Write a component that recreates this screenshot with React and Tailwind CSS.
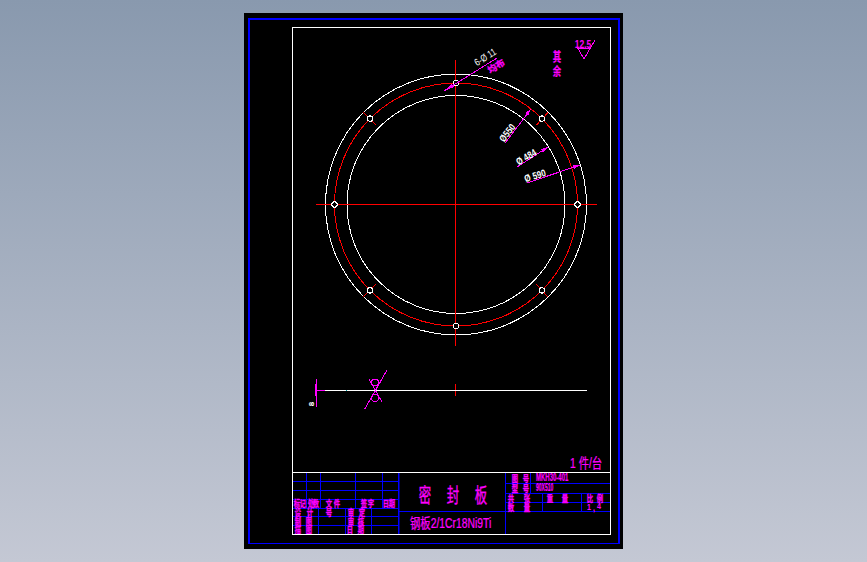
const MAGENTA = '#ff00ff';
const BLUE = '#0000ff';
const RED = '#ff0000';
const CJK = '"Liberation Sans", "Noto Sans CJK SC", sans-serif';

// blue grid of the title block: [x1, y1, x2, y2]
const gridLines = [
  [293, 481.5, 398, 481.5], [293, 490.5, 398, 490.5], [293, 499.5, 398, 499.5],
  [293, 516.5, 398, 516.5], [293, 525.5, 398, 525.5],
  [306.5, 472, 306.5, 508], [320.5, 472, 320.5, 508], [355.5, 472, 355.5, 508], [382.5, 472, 382.5, 508],
  [318.5, 508, 318.5, 534], [345.5, 508, 345.5, 534], [371.5, 508, 371.5, 534],
  [398, 511.5, 505, 511.5],
  [505, 483.5, 610, 483.5], [505, 493.5, 610, 493.5], [505, 511.5, 610, 511.5],
  [530.5, 472, 530.5, 493], [542.5, 493, 542.5, 511], [581.5, 493, 581.5, 511],
];

// small labels of the title block: [text, centre x, baseline y]
const labels = [
  ['标', 297, 507], ['记', 303, 507], ['处', 311, 507], ['数', 316, 507],
  ['文', 329, 507], ['件', 337, 507], ['签', 364, 507], ['字', 371, 507], ['日', 386, 507], ['期', 392, 507],
  ['设', 298, 515.5], ['计', 310, 515.5], ['号', 329, 515.5], ['审', 351, 515.5], ['定', 362, 515.5],
  ['制', 298, 524.5], ['图', 309, 524.5], ['审', 351, 524.5], ['核', 361, 524.5],
  ['描', 298, 533], ['图', 309, 533], ['日', 350, 533], ['期', 361, 533],
  ['图', 515, 481.5], ['号', 526, 481.5], ['型', 515, 491.5], ['号', 526, 491.5],
  ['共', 511, 501.5], ['张', 527, 501.5], ['重', 550, 501.5], ['量', 565, 501.5], ['比', 590, 501.5], ['例', 600, 501.5],
  ['数', 511, 510.5], ['量', 527, 510.5],
];

const holeAngles = [0, 45, 90, 135, 180, 225, 270, 315];

function Txt({ x, y, size, sx = 1, rotate = 0, fill = MAGENTA, anchor = 'middle', bold = false, heavy = 0, children }) {
  return (
    <text
      transform={`translate(${x} ${y}) rotate(${rotate}) scale(${sx} 1)`}
      fontSize={size}
      fill={fill}
      stroke={heavy ? fill : 'none'}
      strokeWidth={heavy}
      textAnchor={anchor}
      fontWeight={bold ? 700 : 400}
      fontFamily={CJK}
    >
      {children}
    </text>
  );
}

function Plate() {
  const cx = 456;
  const cy = 204.5;
  return (
    <g shapeRendering="crispEdges" fill="none">
      <circle cx={cx} cy={cy} r={130.5} stroke="#fff" />
      <circle cx={cx} cy={cy} r={109} stroke="#fff" />
      <circle cx={cx} cy={cy} r={121.5} stroke={RED} />
      <line x1={316} y1={204.5} x2={597} y2={204.5} stroke={RED} />
      <line x1={455.5} y1={60} x2={455.5} y2={346} stroke={RED} />
      <line x1={455.5} y1={384} x2={455.5} y2={396} stroke={RED} />
      <line x1={536.5} y1={125} x2={548} y2={112.5} stroke={RED} />
      <line x1={363} y1={112} x2={376} y2={125} stroke={RED} />
      <line x1={363} y1={297} x2={376} y2={284} stroke={RED} />
      <line x1={536} y1={284} x2={548} y2={297} stroke={RED} />
      {holeAngles.map((a) => (
        <circle
          key={a}
          cx={cx + 121.5 * Math.cos((a * Math.PI) / 180)}
          cy={cy + 121.5 * Math.sin((a * Math.PI) / 180)}
          r={2.7}
          fill="#000"
          stroke="#fff"
        />
      ))}
    </g>
  );
}

function Dimensions() {
  return (
    <g shapeRendering="crispEdges">
      <g stroke={MAGENTA}>
        <line x1={444} y1={91} x2={497} y2={58} />
        <line x1={505} y1={143} x2={531} y2={109} />
        <line x1={517} y1={167} x2={548} y2={147} />
        <line x1={527} y1={183} x2={580} y2={165} />
      </g>
      <polygon points="531,109 525,113 528,116" fill={MAGENTA} />
      <polygon points="548,147 541,149 543,153" fill={MAGENTA} />
      <polygon points="580,165 573,165 574,169" fill={MAGENTA} />
      <polygon points="444,91 452,84 454,87" fill={MAGENTA} />
      <Txt x={487} y={60} size={10} sx={0.8} rotate={-32} fill="#fff">6-Ø 11</Txt>
      <Txt x={498} y={69} size={9} rotate={-32} bold heavy={0.3}>均布</Txt>
      <Txt x={510} y={135} size={10} sx={0.8} rotate={-52} fill="#fff" bold>Ø550</Txt>
      <Txt x={528} y={160} size={10} sx={0.8} rotate={-30} fill="#fff" bold>Ø 484</Txt>
      <Txt x={536} y={179} size={10} sx={0.8} rotate={-17} fill="#fff" bold>Ø 590</Txt>
      <Txt x={557} y={60.5} size={13} sx={0.65} bold heavy={0.2}>其</Txt>
      <Txt x={557} y={76} size={12} sx={0.7} bold heavy={0.2}>余</Txt>
      <Txt x={583} y={47.5} size={10} sx={0.85} bold>12.5</Txt>
      <polyline points="590,48.5 578,48.5 584,59 595,40" fill="none" stroke={MAGENTA} />
    </g>
  );
}

function SideView() {
  return (
    <g shapeRendering="crispEdges" fill="none">
      <line x1={318} y1={390.5} x2={587} y2={390.5} stroke="#fff" />
      <line x1={316.5} y1={379} x2={316.5} y2={407} stroke={MAGENTA} />
      <rect x={315} y={384} width={2} height={12} fill={MAGENTA} />
      <line x1={316} y1={390.5} x2={325} y2={390.5} stroke={MAGENTA} />
      <line x1={387} y1={370} x2={364.5} y2={409.5} stroke={MAGENTA} />
      <line x1={369} y1={379} x2={382} y2={402} stroke={MAGENTA} />
      <line x1={382} y1={379} x2={369} y2={402} stroke={MAGENTA} />
      <circle cx={375} cy={382.5} r={3.5} stroke={MAGENTA} />
      <circle cx={375} cy={398} r={3.5} stroke={MAGENTA} />
      <rect x={346} y={390} width={1} height={1} fill="#00a0a0" />
      <Txt x={314} y={404} size={8} rotate={-90} fill="#fff" bold>8</Txt>
    </g>
  );
}

function TitleBlock() {
  return (
    <g>
      <g shapeRendering="crispEdges" stroke={BLUE}>
        {gridLines.map(([x1, y1, x2, y2], i) => (
          <line key={i} x1={x1} y1={y1} x2={x2} y2={y2} />
        ))}
      </g>
      <rect x={293} y={508} width={106} height={1} fill={BLUE} />
      <rect x={398} y={472} width={1.5} height={62} fill={BLUE} />
      <rect x={505} y={472} width={1} height={62} fill={BLUE} />
      <rect x={505} y={502} width={105} height={1} fill={BLUE} />
      <rect x={293} y={472} width={317} height={1} fill="#fff" />

      {labels.map(([t, x, y], i) => (
        <Txt key={i} x={x} y={y} size={9} sx={0.7} bold heavy={0.3}>{t}</Txt>
      ))}

      <Txt x={425} y={502.5} size={20} sx={0.62} heavy={0.35}>密</Txt>
      <Txt x={453} y={502.5} size={20} sx={0.62} heavy={0.35}>封</Txt>
      <Txt x={481} y={502.5} size={20} sx={0.62} heavy={0.35}>板</Txt>
      <Txt x={410} y={528} size={14} sx={0.74} anchor="start" heavy={0.25}>钢板2/1Cr18Ni9Ti</Txt>
      <Txt x={536} y={481} size={10} sx={0.6} anchor="start" bold heavy={0.2}>MKH30-401</Txt>
      <Txt x={536} y={491} size={10} sx={0.5} anchor="start" bold heavy={0.2}>90X510</Txt>
      <Txt x={589} y={510} size={9} sx={0.8} bold>1</Txt>
      <Txt x={594} y={511} size={9} sx={0.8} bold>,</Txt>
      <Txt x={599} y={509} size={9} sx={0.8} bold>4</Txt>
      <Txt x={570} y={468} size={14} sx={0.74} anchor="start" heavy={0.2}>1 件/台</Txt>
    </g>
  );
}

export default function App() {
  return (
    <div className="h-screen flex justify-center bg-linear-to-b from-[#8999ae] to-[#c4c8d4] overflow-hidden">
      <div className="mt-[13px] w-[379px] h-[536px] bg-black pl-[4px] pt-[5px]">
        <div className="w-[372px] h-[526px] border-t-2 border-l-2 border-r-2 border-b border-[#0000ff] pl-[42px] pt-[7px]">
          <div className="w-[319px] h-[508px] border border-white">
            <svg width="317" height="506" viewBox="293 28 317 506" className="block">
              <Plate />
              <Dimensions />
              <SideView />
              <TitleBlock />
            </svg>
          </div>
        </div>
      </div>
    </div>
  );
}
